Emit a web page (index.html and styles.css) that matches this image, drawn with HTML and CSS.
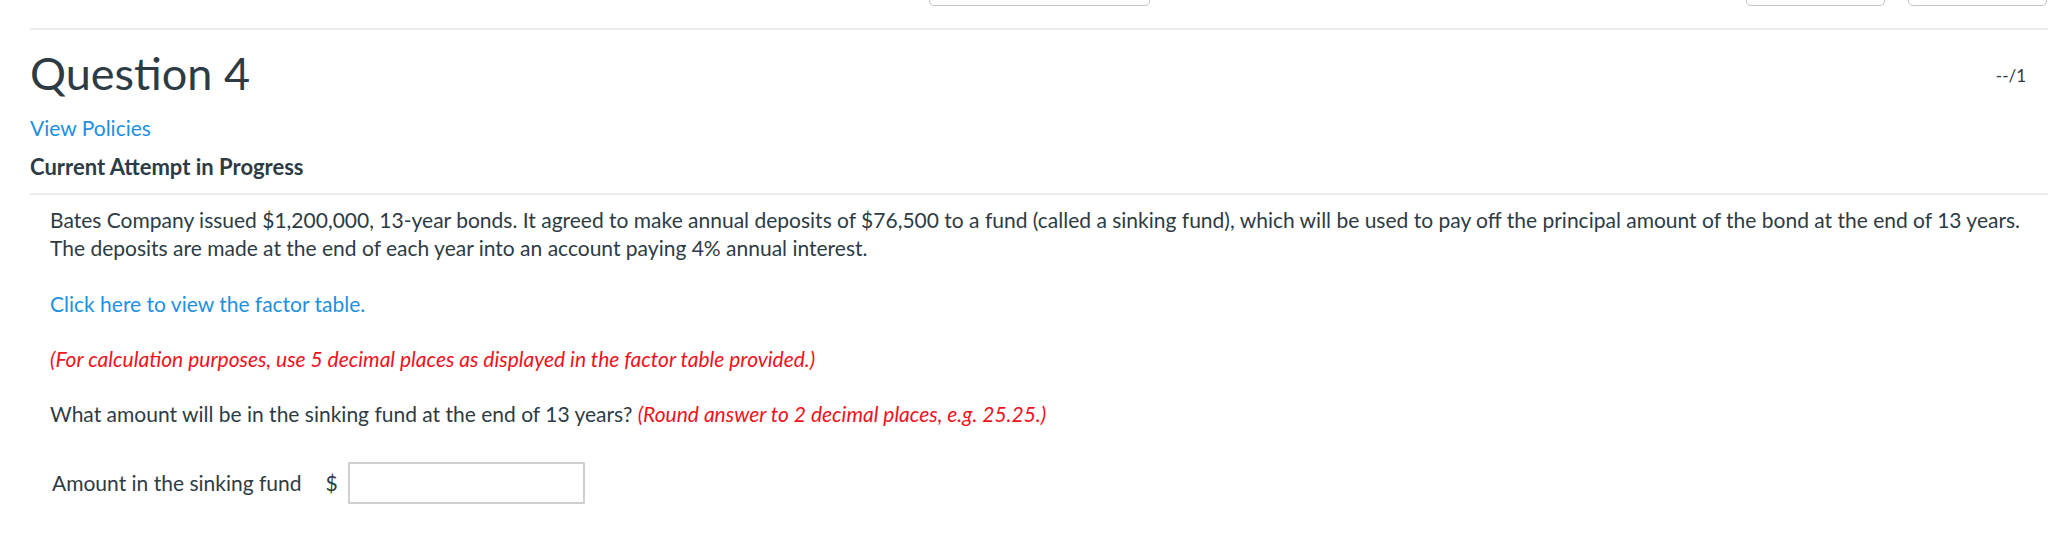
FILE: index.html
```html
<!DOCTYPE html>
<html lang="en">
<head>
<meta charset="utf-8">
<title>Question 4</title>
<link rel="stylesheet" href="styles.css">
</head>
<body>
<div class="page">
  <div class="toolbar">
    <button class="tb-btn tb-wide" type="button"></button>
    <div class="tb-right">
      <button class="tb-btn tb-small" type="button"></button>
      <button class="tb-btn tb-small" type="button"></button>
    </div>
  </div>
  <hr class="rule">
  <div class="q-header">
    <h2 class="q-title">Question 4</h2>
    <span class="q-points">--/1</span>
  </div>
  <a class="policies" href="#">View Policies</a>
  <div class="attempt">Current Attempt in Progress</div>
  <hr class="rule">
  <div class="q-body">
    <p class="para first">Bates Company issued $1,200,000, 13-year bonds. It agreed to make annual deposits of $76,500 to a fund (called a sinking fund), which will be used to pay off the principal amount of the bond at the end of 13 years. The deposits are made at the end of each year into an account paying 4% annual interest.</p>
    <p class="para"><a class="link" href="#">Click here to view the factor table.</a></p>
    <p class="para"><em class="note">(For calculation purposes, use 5 decimal places as displayed in the factor table provided.)</em></p>
    <p class="para">What amount will be in the sinking fund at the end of 13 years? <em class="note">(Round answer to 2 decimal places, e.g. 25.25.)</em></p>
    <div class="answer-row">
      <span class="answer-label">Amount in the sinking fund</span>
      <span class="currency">$</span>
      <input class="answer-input" type="text" aria-label="Amount in the sinking fund">
    </div>
  </div>
</div>
</body>
</html>
```
FILE: styles.css
```css
html, body {
  margin: 0;
  padding: 0;
  background: #ffffff;
}

body {
  font-family: Lato, "Liberation Sans", sans-serif;
  color: #2d3b45;
}

.page {
  padding: 0 16px 0 30px;
}

.toolbar {
  height: 6px;
  overflow: hidden;
  display: flex;
  align-items: flex-end;
}

.tb-btn {
  height: 40px;
  background: #ffffff;
  border: 1px solid #c4c4c4;
  border-radius: 5px;
  padding: 0;
  flex: none;
}

.tb-wide {
  width: 221px;
  margin-left: 899px;
}

.tb-right {
  margin-left: auto;
  display: flex;
  gap: 23px;
  align-items: flex-end;
  padding-right: 1px;
}

.tb-small {
  width: 139px;
}

.rule {
  border: 0;
  height: 2px;
  background: #ececec;
  margin: 22px 0 0 0;
}

.q-header {
  display: flex;
  justify-content: space-between;
  align-items: flex-start;
  margin-top: 15px;
}

.q-title {
  margin: 0;
  font-size: 45px;
  line-height: 56px;
  font-weight: 400;
  color: #2d3b45;
}

.q-points {
  font-size: 17px;
  line-height: 24px;
  margin-top: 19px;
  margin-right: 22px;
  color: #2d3b45;
}

.policies {
  display: block;
  margin-top: 13px;
  font-size: 21px;
  line-height: 28px;
  color: #1e90e0;
  text-decoration: none;
  width: max-content;
}

.attempt {
  margin-top: 11px;
  font-size: 22px;
  line-height: 28px;
  font-weight: 700;
  color: #2d3b45;
}

.attempt + .rule {
  margin-top: 12px;
}

.q-body {
  padding: 11px 0 0 20px;
}

.para {
  margin: 27px 0 0 0;
  font-size: 21px;
  line-height: 28px;
}

.para.first {
  margin-top: 0;
}

.para.first + .para {
  margin-top: 28px;
}

.link {
  color: #1e90e0;
  text-decoration: none;
}

.note {
  color: #f0121c;
  font-style: italic;
}

.answer-row {
  display: flex;
  align-items: center;
  margin-top: 34px;
  padding-left: 2px;
  font-size: 21px;
  line-height: 28px;
}

.answer-label {
  margin-right: 24px;
}

.currency {
  margin-right: 10px;
}

.answer-input {
  box-sizing: border-box;
  width: 237px;
  height: 42px;
  border: 2px solid #cfcfcf;
  border-radius: 1px;
  background: #ffffff;
  font-family: inherit;
  font-size: 18px;
  padding: 0 8px;
  margin: 0;
}
```
